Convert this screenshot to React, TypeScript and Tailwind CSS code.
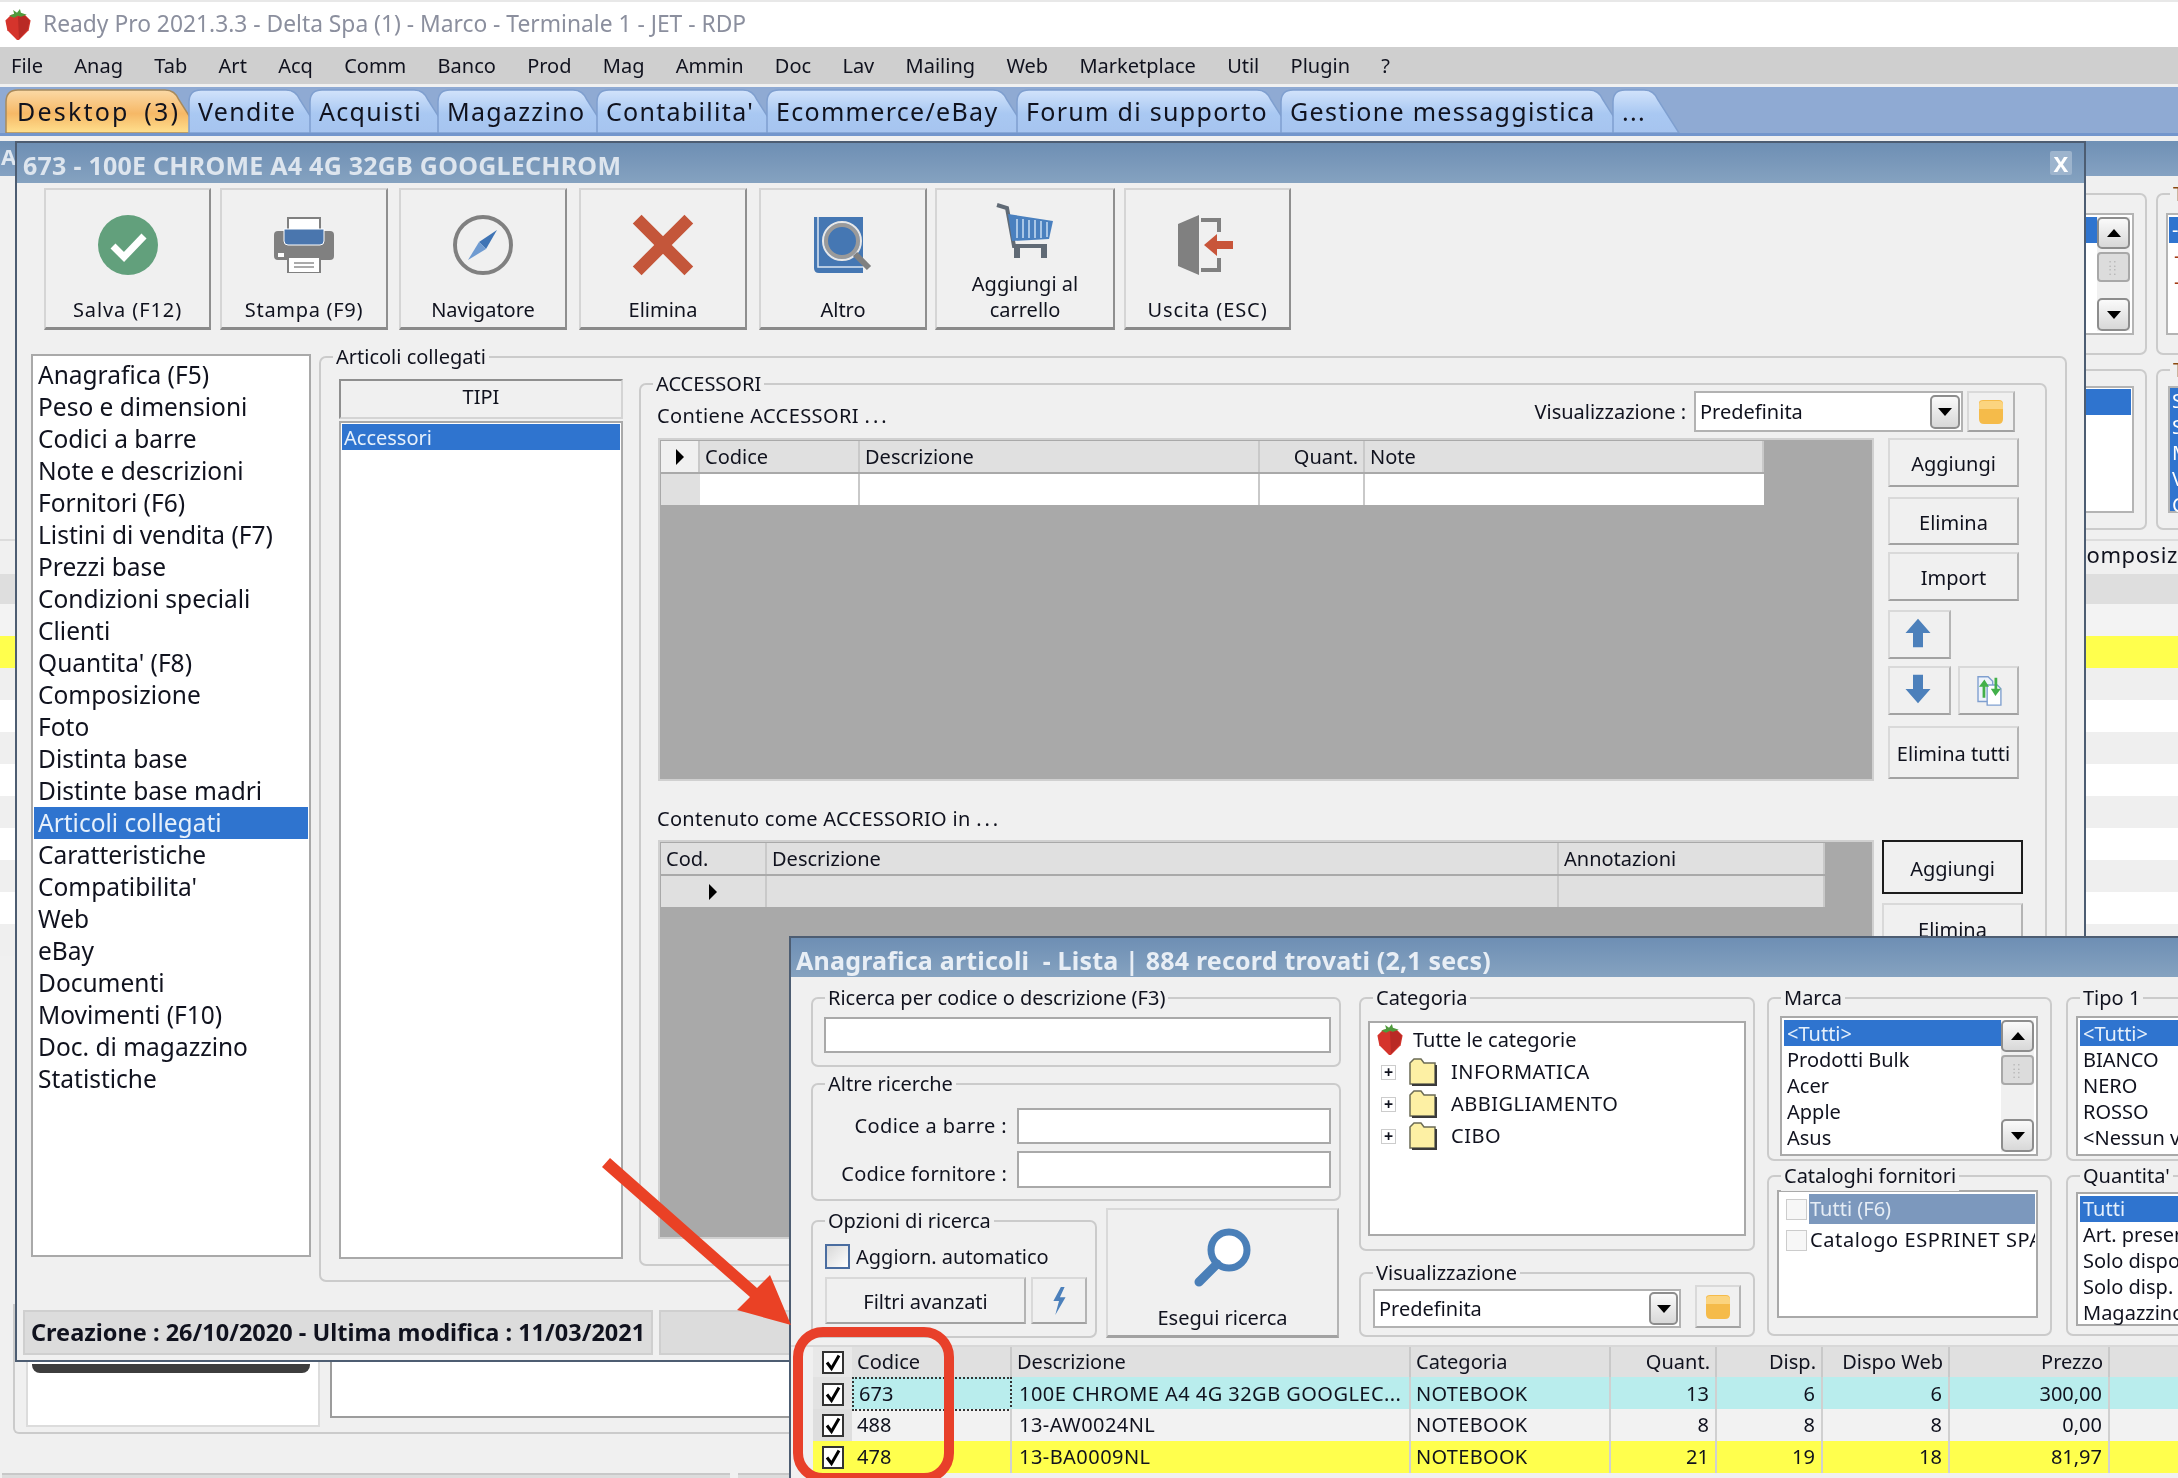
import React from 'react';
import clsx from 'clsx';

const MENU = ['File', 'Anag', 'Tab', 'Art', 'Acq', 'Comm', 'Banco', 'Prod', 'Mag', 'Ammin', 'Doc', 'Lav', 'Mailing', 'Web', 'Marketplace', 'Util', 'Plugin', '?'];

const TABS = [
  { label: 'Desktop (3)', w: 196, active: true },
  { label: 'Vendite', w: 134 },
  { label: 'Acquisti', w: 141 },
  { label: 'Magazzino', w: 172 },
  { label: "Contabilita'", w: 183 },
  { label: 'Ecommerce/eBay', w: 263 },
  { label: 'Forum di supporto', w: 277 },
  { label: 'Gestione messaggistica', w: 345 },
  { label: '...', w: 68 },
];

const SECTIONS = ['Anagrafica (F5)', 'Peso e dimensioni', 'Codici a barre', 'Note e descrizioni', 'Fornitori (F6)', 'Listini di vendita (F7)', 'Prezzi base', 'Condizioni speciali', 'Clienti', "Quantita' (F8)", 'Composizione', 'Foto', 'Distinta base', 'Distinte base madri', 'Articoli collegati', 'Caratteristiche', "Compatibilita'", 'Web', 'eBay', 'Documenti', 'Movimenti (F10)', 'Doc. di magazzino', 'Statistiche'];

const ROWS = [
  { bg: 'bg-[#b9eded]', box: 'bg-[#e2e2e2]', code: '673', desc: '100E CHROME A4 4G 32GB GOOGLEC...', q: '13', d: '6', w: '6', p: '300,00', focus: true },
  { bg: 'bg-[#f2f2f2]', box: 'bg-[#dedede]', code: '488', desc: '13-AW0024NL', q: '8', d: '8', w: '8', p: '0,00' },
  { bg: 'bg-[#ffff4d]', box: 'bg-[#ffff4d]', code: '478', desc: '13-BA0009NL', q: '21', d: '19', w: '18', p: '81,97' },
];

const STRIPES = ['bg-[#f3f3f3]', 'bg-[#ffff4d]', 'bg-[#efefef]', 'bg-white', 'bg-[#efefef]', 'bg-white', 'bg-[#efefef]', 'bg-white', 'bg-[#efefef]', 'bg-white', 'bg-[#efefef]'];

const Strawberry = ({ className }: { className?: string }) => (
  <svg viewBox="0 0 30 34" className={className}>
    <path d="M2 13 L8 7 H22 L28 13 L26 23 L16 33 H14 L4 23 Z" fill="#d5342c" />
    <path d="M15 9 L22 8 L27 13 L25 22 L16 32 Z" fill="#b92a25" />
    <path d="M6 8 L11 6 L10 2 L14 5 L17 1 L18 5 L24 7 L18 9 L15 8 L11 10 Z" fill="#4f9a3c" />
  </svg>
);

const TriangleDown = () => <span className="h-0 w-0 border-x-[7px] border-t-[8px] border-x-transparent border-t-black" />;
const TriangleUp = () => <span className="h-0 w-0 border-x-[7px] border-b-[8px] border-x-transparent border-b-black" />;
const RowMarker = () => <span className="h-0 w-0 border-y-[8px] border-l-[8px] border-y-transparent border-l-black" />;

const RoundBtn = ({ children, className }: { children?: React.ReactNode; className?: string }) => (
  <div className={clsx('flex items-center justify-center rounded-[5px] border-2 border-[#8d8d8d] bg-gradient-to-b from-[#fafafa] to-[#d8d8d8]', className)}>{children}</div>
);

const Folder = ({ className }: { className?: string }) => (
  <svg viewBox="0 0 30 26" className={className}>
    <path d="M3 4 Q3 1 7 1 H23 Q27 1 27 5 V20 Q27 25 22 25 H8 Q3 25 3 20 Z" fill="#f5bb4a" />
    <path d="M3 6 Q3 2 7 2 H23 Q27 2 27 6 V10 H3 Z" fill="#fbd47f" />
  </svg>
);

const TreeFolder = () => (
  <svg viewBox="0 0 30 30" className="h-[30px] w-[30px] shrink-0">
    <path d="M2 6 L6 2 H13 L16 6 H27 V27 H2 Z" fill="#fdf0a4" stroke="#6b6b55" strokeWidth="1.5" />
    <path d="M28 8 V28 H4" fill="none" stroke="#3a3a3a" strokeWidth="2" />
  </svg>
);

const Check = () => (
  <div className="flex h-[23px] w-[22px] items-center justify-center border-2 border-[#333] bg-white">
    <svg viewBox="0 0 16 18" className="h-[19px] w-[16px]">
      <path d="M2 9 L6.5 15 L14 2" fill="none" stroke="#000" strokeWidth="3" />
    </svg>
  </div>
);

const Group = ({ label, className, children }: { label: string; className?: string; children?: React.ReactNode }) => (
  <div className={clsx('relative shrink-0 rounded-[7px] border-2 border-[#cbcbcb]', className)}>
    {label && <span className="absolute -top-[16px] left-[12px] whitespace-nowrap bg-[#f0f0f0] px-[3px] text-[20px] leading-[30px]">{label}</span>}
    {children}
  </div>
);

const Btn = ({ className, children }: { className?: string; children?: React.ReactNode }) => (
  <div className={clsx('flex shrink-0 items-center justify-center border-2 border-[#d9d9d9] border-r-[#b4b4b4] border-b-[#a2a2a2] bg-[#f0f0f0] pt-[3px] text-[20px]', className)}>{children}</div>
);

const ToolBtn = ({ className, label, children }: { className?: string; label: React.ReactNode; children: React.ReactNode }) => (
  <div className={clsx('relative flex h-[142px] shrink-0 flex-col items-center border-2 border-[#d5d5d5] border-r-[#8f8f8f] border-b-[3px] border-b-[#8a8a8a] bg-[#f0f0f0] text-[20px] leading-[26px]', className)}>
    <div className="flex h-[84px] w-full items-center justify-center pt-[26px]">{children}</div>
    <div className="flex flex-1 items-end pb-[4px] text-center">{label}</div>
  </div>
);

const Combo = ({ className, btnClass }: { className?: string; btnClass?: string }) => (
  <div className={clsx('flex shrink-0 items-center justify-between border-2 border-[#b2b2b2] bg-white pl-[4px] pr-[1px] text-[20px]', className)}>
    Predefinita
    <RoundBtn className={btnClass}><TriangleDown /></RoundBtn>
  </div>
);

const HeadCell = ({ className, children }: { className?: string; children?: React.ReactNode }) => (
  <div className={clsx('flex items-center overflow-hidden whitespace-nowrap border-r-2 border-[#c9c9c9] bg-[#e0e0e0] px-[5px] text-[20px]', className)}>{children}</div>
);

const Scrollbar = ({ className }: { className?: string }) => (
  <div className={clsx('flex shrink-0 flex-col bg-[#f0f0f0]', className)}>
    <RoundBtn className="h-[32px] w-full"><TriangleUp /></RoundBtn>
    <div className="mt-[3px] flex h-[30px] items-center justify-center rounded-[4px] border-2 border-[#a8a8a8] bg-[#dcdcdc] text-[10px] leading-[8px] tracking-[2px] text-[#aaa]">::<br />::</div>
    <RoundBtn className="mt-auto h-[33px] w-full"><TriangleDown /></RoundBtn>
  </div>
);

function BackWindow() {
  return (
    <div className="absolute inset-0 flex flex-col bg-[#f0f0f0]">
      <div className="flex h-[35px] shrink-0 items-start bg-gradient-to-b from-[#6f90b5] to-[#85a2c2] pl-[1px] text-[22px] font-bold leading-[30px] text-[#dfe7f0]">A</div>
      <div className="mt-[17px] flex h-[162px] shrink-0 pl-[1900px]">
        <Group label="" className="flex w-[247px] items-stretch py-[18px] pl-[10px] pr-[11px]">
          <div className="flex flex-1 border-2 border-[#b4b4b4] bg-white p-[2px]">
            <div className="h-[26px] flex-1 bg-[#2f74cf]" />
            <Scrollbar className="w-[33px]" />
          </div>
        </Group>
        <Group label="T" className="ml-[9px] flex w-[240px] py-[18px] pl-[8px] text-[#8a4a10]">
          <div className="flex-1 border-2 border-[#b4b4b4] bg-white p-[2px] pl-[1px] text-[20px] leading-[26px]">
            <div className="h-[26px] bg-[#2f74cf] pl-[3px] text-white">-</div>
            <div className="pl-[5px] text-[#a33c14]">-</div>
            <div className="pl-[5px] text-[#a33c14]">-</div>
          </div>
        </Group>
      </div>
      <div className="mt-[14px] flex h-[161px] shrink-0 pl-[1900px]">
        <Group label="" className="flex w-[247px] py-[15px] pl-[10px] pr-[11px]">
          <div className="flex-1 border-2 border-[#b4b4b4] bg-white p-[1px] pr-[1px]">
            <div className="h-[26px] bg-[#2f74cf]" />
          </div>
        </Group>
        <Group label="T" className="ml-[9px] flex w-[240px] py-[15px] pl-[10px] text-[#8a4a10]">
          <div className="flex-1 border-2 border-[#b4b4b4] bg-[#2f74cf] pl-[2px] text-[20px] leading-[26px] text-white">
            <div>S</div><div>S</div><div>M</div><div>V</div><div>C</div>
          </div>
        </Group>
      </div>
      <div className="mt-[9px] flex h-[35px] shrink-0 items-start border-t-2 border-[#dcdcdc] pl-[170px] text-[22px] leading-[26px]">
        <span className="ml-[1902px] whitespace-nowrap tracking-[0.6px]">Composizione</span>
      </div>
      <div className="h-[30px] shrink-0 bg-[#dedede]" />
      {STRIPES.map((s, i) => <div key={i} className={clsx('h-[32px] shrink-0', s)} />)}
      <div className="mt-auto flex flex-col">
        <div className="mx-[13px] flex h-[130px] w-[900px] items-start rounded-b-[6px] border-2 border-t-0 border-[#cbcbcb] pl-[11px]">
          <div className="relative h-[123px] w-[294px] border-2 border-t-0 border-[#dcdcdc] bg-white">
            <div className="absolute left-[4px] right-[8px] top-[60px] h-[9px] rounded-b-[8px] bg-[#3d3d3d]" />
          </div>
          <div className="ml-[10px] h-[114px] flex-1 border-2 border-t-0 border-[#9c9c9c] bg-white" />
        </div>
        <div className="mt-[39px] flex h-[5px] gap-[8px] pl-[2px]">
          <div className="w-[728px] border-t-2 border-[#c8c8c8] bg-[#dcdcdc]" />
          <div className="flex-1 border-t-2 border-[#c8c8c8] bg-[#dcdcdc]" />
        </div>
      </div>
    </div>
  );
}

function ProductWindow() {
  return (
    <div className="absolute left-[15px] top-0 h-[1221px] w-[2071px] border-2 border-[#4d5d72] bg-[#f0f0f0]">
      <div className="flex h-[40px] items-center justify-between bg-gradient-to-b from-[#6e8fb4] to-[#85a2c0] pl-[6px] pr-[12px] text-[25px] font-bold tracking-[0.25px] text-[#dde5ee]">
        <span className="pt-[6px]">673 - 100E CHROME A4 4G 32GB GOOGLECHROM</span>
        <span className="flex h-[24px] w-[22px] items-center justify-center rounded-[2px] bg-[#9db4cd] text-[22px] leading-none text-white">X</span>
      </div>

      <div className="mt-[5px] flex pl-[27px]">
        <ToolBtn className="w-[167px]" label={<span className="tracking-[0.9px]">Salva (F12)</span>}>
          <svg viewBox="0 0 60 60" className="h-[60px] w-[60px]">
            <circle cx="30" cy="30" r="30" fill="#62a07c" />
            <path d="M15 31 L26 42 L46 21" fill="none" stroke="#fff" strokeWidth="7" />
          </svg>
        </ToolBtn>
        <ToolBtn className="ml-[9px] w-[168px]" label={<span className="tracking-[0.7px]">Stampa (F9)</span>}>
          <svg viewBox="0 0 60 56" className="h-[56px] w-[60px]">
            <rect x="14" y="1" width="32" height="16" fill="#fff" stroke="#808080" strokeWidth="2" />
            <rect x="0" y="14" width="60" height="29" rx="4" fill="#808080" />
            <path d="M10 12 H50 V24 Q50 28 46 28 H14 Q10 28 10 24 Z" fill="#4a76ae" stroke="#fff" strokeWidth="1" />
            <rect x="4" y="36" width="6" height="4" fill="#fff" />
            <rect x="14" y="40" width="32" height="16" fill="#fff" stroke="#808080" strokeWidth="2" />
            <path d="M20 46 H40 M20 50 H40" stroke="#aaa" strokeWidth="2" />
          </svg>
        </ToolBtn>
        <ToolBtn className="ml-[11px] w-[168px]" label="Navigatore">
          <svg viewBox="0 0 60 60" className="h-[60px] w-[60px]">
            <circle cx="30" cy="30" r="28" fill="none" stroke="#808080" strokeWidth="4" />
            <path d="M44 15 L33 34 L26 27 Z" fill="#3f74b5" />
            <path d="M15 45 L26 27 L33 34 Z" fill="#6f9bd1" />
          </svg>
        </ToolBtn>
        <ToolBtn className="ml-[12px] w-[168px]" label="Elimina">
          <svg viewBox="0 0 60 60" className="h-[62px] w-[62px]">
            <path d="M5 5 L55 55 M55 5 L5 55" stroke="#c4563a" strokeWidth="12" />
          </svg>
        </ToolBtn>
        <ToolBtn className="ml-[12px] w-[168px]" label="Altro">
          <svg viewBox="0 0 60 60" className="h-[60px] w-[60px]">
            <path d="M1 2 H50 V58 H6 Q1 58 1 53 Z" fill="#4577b3" />
            <path d="M5 2 V52 H50" fill="none" stroke="#dbe6f2" strokeWidth="1.5" />
            <circle cx="29" cy="26" r="16" fill="#4577b3" stroke="#9a9a9a" strokeWidth="4" />
            <circle cx="29" cy="26" r="19" fill="none" stroke="#e8e8e8" strokeWidth="2" />
            <path d="M42 39 L56 53" stroke="#808080" strokeWidth="6" />
          </svg>
        </ToolBtn>
        <ToolBtn className="ml-[8px] w-[180px]" label={<>Aggiungi al<br />carrello</>}>
          <svg viewBox="0 0 60 60" className="-mt-[24px] h-[60px] w-[60px]">
            <path d="M2 3 L12 6 L19 44 H52" fill="none" stroke="#606a75" strokeWidth="4" />
            <path d="M13 12 L58 19 L54 37 L17 39 Z" fill="#4a80bf" />
            <path d="M22 17 V36 M28 17 V36 M34 18 V36 M40 18 V36 M46 19 V36 M52 20 V35" stroke="#a9c6e6" strokeWidth="2" />
            <path d="M22 46 V56 M49 46 V56" stroke="#606a75" strokeWidth="6" />
          </svg>
        </ToolBtn>
        <ToolBtn className="ml-[9px] w-[167px]" label={<span className="tracking-[0.9px]">Uscita (ESC)</span>}>
          <svg viewBox="0 0 56 62" className="-ml-[5px] h-[62px] w-[56px]">
            <path d="M1 10 L22 1 V61 L1 52 Z" fill="#808080" />
            <path d="M24 6 H42 V18 M42 44 V56 H24" fill="none" stroke="#808080" strokeWidth="4" />
            <path d="M27 31 L40 20 V27 H56 V35 H40 V42 Z" fill="#c8553a" />
          </svg>
        </ToolBtn>
      </div>

      <div className="mt-[24px] flex pl-[14px]">
        <div className="h-[903px] w-[280px] shrink-0 border-2 border-[#a9a9a9] bg-white p-[1px] pt-[3px] text-[24.5px] leading-[32px]">
          {SECTIONS.map(s => (
            <div key={s} className={clsx('h-[32px] whitespace-nowrap pl-[4px]', s === 'Articoli collegati' && 'bg-[#2f74cf] text-[#e6f0fb]')}>{s}</div>
          ))}
        </div>

        <Group label="Articoli collegati" className="ml-[8px] mt-[2px] flex h-[926px] w-[1748px] items-start pl-[18px]">
          <div className="mt-[21px] flex w-[284px] shrink-0 flex-col">
            <div className="flex h-[40px] items-start justify-center border-2 border-[#d4d4d4] border-l-[#8f8f8f] border-t-[#8f8f8f] pt-[1px] text-[20px]">TIPI</div>
            <div className="mt-[2px] h-[838px] border-2 border-[#a9a9a9] bg-white p-[1px]">
              <div className="h-[26px] bg-[#2f74cf] pl-[2px] pt-[1px] text-[20px] leading-[26px] text-[#e6f0fb]">Accessori</div>
            </div>
          </div>

          <Group label="ACCESSORI" className="ml-[16px] mt-[25px] h-[883px] w-[1408px]">
            <div className="mt-[6px] flex h-[41px] items-center pl-[16px] pr-[30px] text-[20px]">
              <span className="mt-[8px] tracking-[0.4px]">Contiene ACCESSORI <span className="tracking-[3px]">...</span></span>
              <span className="ml-auto mr-[8px]">Visualizzazione :</span>
              <Combo className="h-[41px] w-[269px]" btnClass="h-[34px] w-[30px]" />
              <Btn className="ml-[4px] h-[41px] w-[48px]"><Folder className="-mt-[3px] h-[26px] w-[30px]" /></Btn>
            </div>

            <div className="mt-[6px] flex pl-[17px]">
              <div className="h-[343px] w-[1216px] shrink-0 border-2 border-[#d0d0d0] bg-[#a9a9a9] p-[1px]">
                <div className="grid h-[64px] w-[1103px] grid-cols-[39px_160px_400px_105px_399px] grid-rows-[31px_33px] border-b-2 border-[#d0d0d0]">
                  <HeadCell className="justify-center bg-[#f0f0f0]"><RowMarker /></HeadCell>
                  <HeadCell>Codice</HeadCell>
                  <HeadCell>Descrizione</HeadCell>
                  <HeadCell className="justify-end">Quant.</HeadCell>
                  <HeadCell className="border-r-0">Note</HeadCell>
                  <div className="mt-[2px] bg-[#e0e0e0]" />
                  <div className="mt-[2px] border-r-2 border-[#c9c9c9] bg-white" />
                  <div className="mt-[2px] border-r-2 border-[#c9c9c9] bg-white" />
                  <div className="mt-[2px] border-r-2 border-[#c9c9c9] bg-white" />
                  <div className="mt-[2px] bg-white" />
                </div>
              </div>
              <div className="ml-[14px] flex w-[131px] flex-col">
                <Btn className="h-[49px] w-full">Aggiungi</Btn>
                <Btn className="mt-[10px] h-[48px] w-full">Elimina</Btn>
                <Btn className="mt-[7px] h-[49px] w-full">Import</Btn>
                <Btn className="mt-[9px] h-[49px] w-[63px]">
                  <svg viewBox="0 0 30 36" className="-mt-[6px] -ml-[4px] h-[30px] w-[28px]"><path d="M15 1 L30 18 H21 V35 H9 V18 H0 Z" fill="#4c80bb" /></svg>
                </Btn>
                <div className="mt-[7px] flex gap-[7px]">
                  <Btn className="h-[49px] w-[63px]">
                    <svg viewBox="0 0 30 36" className="-mt-[7px] -ml-[4px] h-[30px] w-[28px]"><path d="M15 35 L30 18 H21 V1 H9 V18 H0 Z" fill="#4c80bb" /></svg>
                  </Btn>
                  <Btn className="h-[49px] w-[61px]">
                    <svg viewBox="0 0 30 36" className="-mt-[3px] h-[33px] w-[28px]">
                      <path d="M3 3 H14 L19 8 V30 H3 Z" fill="#eef3fb" stroke="#7f9fcf" strokeWidth="1.5" />
                      <path d="M13 12 H24 L28 16 V34 H13 Z" fill="#fff" stroke="#7f9fcf" strokeWidth="1.5" />
                      <path d="M8 26 V14 H4 L10 6 L15 14 H11 V26 Z" fill="#43b04a" />
                      <path d="M21 4 V16 H17 L22 24 L28 16 H24 V4 Z" fill="#43b04a" />
                    </svg>
                  </Btn>
                </div>
                <Btn className="mt-[11px] h-[53px] w-full">Elimina tutti</Btn>
              </div>
            </div>

            <div className="mt-[23px] h-[30px] pl-[16px] text-[20px] leading-[30px] tracking-[0.3px]">Contenuto come ACCESSORIO in <span className="tracking-[3px]">...</span></div>

            <div className="mt-[6px] flex pl-[17px]">
              <div className="h-[399px] w-[1216px] shrink-0 border-2 border-[#d0d0d0] bg-[#a9a9a9] p-[1px]">
                <div className="grid h-[64px] w-[1164px] grid-cols-[106px_792px_266px] grid-rows-[31px_33px]">
                  <HeadCell>Cod.</HeadCell>
                  <HeadCell>Descrizione</HeadCell>
                  <HeadCell>Annotazioni</HeadCell>
                  <HeadCell className="mt-[2px] justify-center"><RowMarker /></HeadCell>
                  <HeadCell className="mt-[2px]" />
                  <HeadCell className="mt-[2px]" />
                </div>
              </div>
              <div className="ml-[8px] flex w-[141px] flex-col">
                <Btn className="h-[54px] w-full outline-2 -outline-offset-2 outline-[#1c1c1c]">Aggiungi</Btn>
                <Btn className="mt-[9px] h-[50px] w-full">Elimina</Btn>
              </div>
            </div>
          </Group>
        </Group>
      </div>

      <div className="mt-[28px] flex h-[45px] px-[6px]">
        <div className="flex w-[630px] shrink-0 items-center overflow-hidden whitespace-nowrap border-2 border-[#cfcfcf] bg-[#dcdcdc] pl-[6px] text-[23.5px] font-bold">
          Creazione : 26/10/2020 - Ultima modifica : 11/03/2021
        </div>
        <div className="ml-[6px] flex-1 border-2 border-[#cfcfcf] bg-[#dcdcdc]" />
      </div>
    </div>
  );
}

function ListWindow() {
  return (
    <div className="absolute left-[789px] top-[795px] h-[560px] w-[1420px] border-2 border-b-0 border-r-0 border-[#4d5d72] bg-[#f0f0f0]">
      <div className="flex h-[39px] items-center bg-gradient-to-b from-[#6e8fb4] to-[#85a2c0] pl-[5px] text-[25px] font-bold tracking-[0.2px] text-[#e8eef5]">
        <span className="whitespace-pre pt-[7px]">Anagrafica articoli  - Lista | 884 record trovati (2,1 secs)</span>
      </div>

      <div className="flex h-[368px] pl-[20px]">
        <div className="w-[530px] shrink-0 pt-[20px] text-[20px]">
          <Group label="Ricerca per codice o descrizione (F3)" className="h-[70px] w-full pl-[11px] pr-[8px] pt-[18px]">
            <div className="h-[36px] border-2 border-[#a9a9a9] bg-white" />
          </Group>
          <Group label="Altre ricerche" className="mt-[16px] h-[118px] w-full pr-[8px] pt-[23px]">
            <div className="flex h-[36px] items-center justify-end">
              <span className="mr-[10px] tracking-[0.4px]">Codice a barre :</span>
              <div className="h-[36px] w-[314px] border-2 border-[#a9a9a9] bg-white" />
            </div>
            <div className="mt-[7px] flex h-[37px] items-center justify-end">
              <span className="mr-[10px] mt-[8px] tracking-[0.2px]">Codice fornitore :</span>
              <div className="h-[37px] w-[314px] border-2 border-[#a9a9a9] bg-white" />
            </div>
          </Group>
          <div className="mt-[7px] flex h-[130px] items-end">
            <Group label="Opzioni di ricerca" className="h-[118px] w-[286px] pl-[12px] pt-[22px]">
              <div className="flex h-[25px] items-center">
                <div className="h-[25px] w-[25px] border-2 border-[#4a6da0] bg-gradient-to-br from-[#d8d8d8] to-white" />
                <span className="ml-[6px]">Aggiorn. automatico</span>
              </div>
              <div className="mt-[8px] flex">
                <Btn className="h-[47px] w-[201px]">Filtri avanzati</Btn>
                <Btn className="ml-[5px] h-[47px] w-[56px]">
                  <svg viewBox="0 0 16 32" className="-mt-[3px] h-[30px] w-[16px]"><path d="M10 1 L2 16 H8 L4 31 L15 12 H9 L14 1 Z" fill="#4c80bb" /></svg>
                </Btn>
              </div>
            </Group>
            <Btn className="ml-[9px] h-[130px] w-[233px] flex-col border-b-[3px]">
              <svg viewBox="0 0 60 60" className="mt-[15px] h-[60px] w-[60px]">
                <circle cx="36" cy="22" r="18" fill="#fff" stroke="#4a7fb8" strokeWidth="7" />
                <path d="M24 36 L6 54" stroke="#4a7fb8" strokeWidth="9" strokeLinecap="round" />
              </svg>
              <span className="mt-auto pb-[2px]">Esegui ricerca</span>
            </Btn>
          </div>
        </div>

        <div className="ml-[18px] w-[396px] shrink-0 pt-[20px] text-[20px]">
          <Group label="Categoria" className="h-[254px] w-full px-[7px] pt-[22px]">
            <div className="h-[215px] border-2 border-[#a9a9a9] bg-white pl-[5px]">
              <div className="flex h-[33px] items-center">
                <Strawberry className="h-[33px] w-[30px]" />
                <span className="ml-[8px]">Tutte le categorie</span>
              </div>
              {['INFORMATICA', 'ABBIGLIAMENTO', 'CIBO'].map(c => (
                <div key={c} className="flex h-[32px] items-center pl-[6px]">
                  <div className="flex h-[15px] w-[15px] items-center justify-center border border-[#ccc] text-[16px] font-bold leading-none">+</div>
                  <div className="ml-[12px]"><TreeFolder /></div>
                  <span className="ml-[13px] tracking-[0.5px]">{c}</span>
                </div>
              ))}
            </div>
          </Group>
          <Group label="Visualizzazione" className="mt-[21px] flex h-[65px] w-full items-start pl-[12px] pt-[15px]">
            <Combo className="h-[39px] w-[308px]" btnClass="h-[33px] w-[29px]" />
            <Btn className="-mt-[4px] ml-[14px] h-[43px] w-[46px]"><Folder className="-mt-[3px] h-[26px] w-[30px]" /></Btn>
          </Group>
        </div>

        <div className="ml-[12px] w-[285px] shrink-0 pt-[20px] text-[20px] leading-[26px]">
          <Group label="Marca" className="h-[164px] w-full pl-[11px] pr-[12px] pt-[17px]">
            <div className="flex h-[140px] border-2 border-[#a9a9a9] bg-white p-[2px]">
              <div className="flex-1">
                <div className="h-[26px] bg-[#2f74cf] pl-[3px] pt-[1px] text-[#e6f0fb]">&lt;Tutti&gt;</div>
                {['Prodotti Bulk', 'Acer', 'Apple', 'Asus'].map(m => <div key={m} className="pl-[3px] pt-[1px] -mb-[1px]">{m}</div>)}
              </div>
              <Scrollbar className="w-[33px]" />
            </div>
          </Group>
          <Group label="Cataloghi fornitori" className="mt-[14px] h-[161px] w-full pl-[8px] pr-[12px] pt-[13px]">
            <div className="h-[128px] overflow-hidden border-2 border-[#a9a9a9] bg-white pl-[7px] pr-[1px] pt-[2px] leading-[30px]">
              <div className="flex h-[30px] items-center">
                <div className="h-[21px] w-[21px] shrink-0 border border-[#ccc] bg-[#f7f7f7]" />
                <div className="ml-[2px] flex-1 bg-[#7c98bd] pl-[1px] text-[#e6edf5]">Tutti (F6)</div>
              </div>
              <div className="mt-[1px] flex h-[30px] items-center">
                <div className="h-[21px] w-[21px] shrink-0 border border-[#ccc] bg-[#f7f7f7]" />
                <div className="ml-[2px] overflow-hidden whitespace-nowrap pl-[1px] tracking-[0.6px]">Catalogo ESPRINET SPA</div>
              </div>
            </div>
          </Group>
        </div>

        <div className="ml-[14px] w-[300px] shrink-0 pt-[20px] text-[20px] leading-[26px]">
          <Group label="Tipo 1" className="h-[164px] w-full pl-[8px] pt-[17px]">
            <div className="h-[140px] border-2 border-[#a9a9a9] bg-white p-[2px]">
              <div className="h-[26px] bg-[#2f74cf] pl-[3px] pt-[1px] text-[#e6f0fb]">&lt;Tutti&gt;</div>
              {['BIANCO', 'NERO', 'ROSSO', '<Nessun valore>'].map(m => <div key={m} className="pl-[3px] pt-[1px] -mb-[1px]">{m}</div>)}
            </div>
          </Group>
          <Group label="Quantita'" className="mt-[14px] h-[161px] w-full pl-[8px] pt-[15px]">
            <div className="h-[134px] border-2 border-[#a9a9a9] bg-white p-[2px]">
              <div className="h-[26px] bg-[#2f74cf] pl-[3px] text-[#e6f0fb]">Tutti</div>
              {['Art. presenti', 'Solo disponibili', 'Solo disp. web', 'Magazzino'].map(m => <div key={m} className="pl-[3px]">{m}</div>)}
            </div>
          </Group>
        </div>
      </div>

      <div className="border-t-2 border-[#d8d8d8] pl-[22px] text-[20px]">
        <div className="grid h-[30px] grid-cols-[39px_160px_399px_200px_106px_106px_127px_160px_1fr] bg-[#e0e0e0]">
          <div className="flex items-center justify-center bg-[#e8e8e8]"><Check /></div>
          <HeadCell>Codice</HeadCell>
          <HeadCell>Descrizione</HeadCell>
          <HeadCell>Categoria</HeadCell>
          <HeadCell className="justify-end">Quant.</HeadCell>
          <HeadCell className="justify-end">Disp.</HeadCell>
          <HeadCell className="justify-end">Dispo Web</HeadCell>
          <HeadCell className="justify-end">Prezzo</HeadCell>
          <HeadCell className="border-r-0" />
        </div>
        {ROWS.map(r => (
          <div key={r.code} className={clsx('grid h-[32px] grid-cols-[39px_160px_399px_200px_106px_106px_127px_160px_1fr]', r.bg)}>
            <div className={clsx('flex items-center justify-center', r.box)}><Check /></div>
            <div className={clsx('flex items-center pl-[5px]', r.focus ? 'border-2 border-dotted border-[#333]' : 'border-r-2 border-[#d0d0d0]')}>{r.code}</div>
            <div className="flex items-center overflow-hidden whitespace-nowrap border-r-2 border-[#d0d0d0] pl-[7px] tracking-[0.45px]">{r.desc}</div>
            <div className="flex items-center border-r-2 border-[#d0d0d0] pl-[5px] tracking-[0.3px]">NOTEBOOK</div>
            <div className="flex items-center justify-end border-r-2 border-[#d0d0d0] pr-[6px]">{r.q}</div>
            <div className="flex items-center justify-end border-r-2 border-[#d0d0d0] pr-[6px]">{r.d}</div>
            <div className="flex items-center justify-end border-r-2 border-[#d0d0d0] pr-[6px]">{r.w}</div>
            <div className="flex items-center justify-end border-r-2 border-[#d0d0d0] pr-[6px]">{r.p}</div>
            <div />
          </div>
        ))}
      </div>
    </div>
  );
}

export default function App() {
  return (
    <div className="relative flex h-[1478px] w-[2178px] flex-col overflow-hidden bg-[#f0f0f0] font-['Noto_Sans','DejaVu_Sans',sans-serif] text-[#10121e] [filter:blur(0.5px)]">
      <div className="flex h-[47px] shrink-0 items-center border-t-2 border-[#e8e8e8] bg-white pl-[3px] text-[22.8px] text-[#8b8f9e]">
        <Strawberry className="h-[33px] w-[30px]" />
        <span className="ml-[10px]">Ready Pro 2021.3.3 - Delta Spa (1) - Marco - Terminale 1 - JET - RDP</span>
      </div>

      <div className="flex h-[37px] shrink-0 items-center gap-[31.3px] bg-[#cfcfcf] pl-[11px] text-[20px]">
        {MENU.map(m => <span key={m}>{m}</span>)}
      </div>

      <div className="mt-[3px] flex h-[49px] shrink-0 items-end border-b-[3px] border-[#7396cc] bg-[#8faad3] pl-[5px]">
        {TABS.map((t, i) => (
          <div key={t.label} className={clsx('relative flex h-[45px] shrink-0 items-center pl-[10px] pt-[2px] text-[25px] tracking-[1.3px]', i === 0 && '[word-spacing:6px] pl-[12px]', i > 0 && '-ml-[13px]')} style={{ width: t.w }}>
            <svg className="absolute inset-0 h-full w-full" viewBox={`0 0 ${t.w} 45`} preserveAspectRatio="none">
              <defs>
                <linearGradient id={`tab-${i}`} x1="0" x2="0" y1="0" y2="1">
                  <stop offset="0" stopColor={t.active ? '#fbd9a6' : '#d2e3fb'} />
                  <stop offset="0.55" stopColor={t.active ? '#f6b866' : '#a9c8f2'} />
                  <stop offset="1" stopColor={t.active ? '#ffe08e' : '#a6c4ef'} />
                </linearGradient>
              </defs>
              <path d={`M1 45 V14 Q1 2 13 2 H${t.w - 36} Q${t.w - 26} 2 ${t.w - 22} 12 L${t.w - 1} 45 Z`} fill={`url(#tab-${i})`} stroke={t.active ? '#a88a5c' : '#7f9fcf'} strokeWidth="1.5" />
            </svg>
            <span className={clsx('relative whitespace-nowrap', i === 0 && 'tracking-[2.2px]')}>{t.label}</span>
          </div>
        ))}
      </div>

      <div className="mt-[5px] h-[1337px] shrink-0 bg-white" />

      {/* windows on the desktop, everything below the tab strip */}
      <div className="absolute inset-x-0 bottom-0 top-[141px]">
        <BackWindow />
        <ProductWindow />
        <ListWindow />
      </div>

      {/* annotation drawn on top of the screenshot */}
      <div className="absolute left-[793px] top-[1327px] h-[156px] w-[161px] rounded-[30px] border-[10px] border-[#e8402a]" />
      <svg viewBox="0 0 200 180" className="absolute left-[600px] top-[1150px] h-[180px] w-[200px]">
        <path d="M10 8 L2 17 L150 147 L137 160 L191 175 L170 125 L157 138 Z" fill="#ea4125" />
      </svg>
    </div>
  );
}
